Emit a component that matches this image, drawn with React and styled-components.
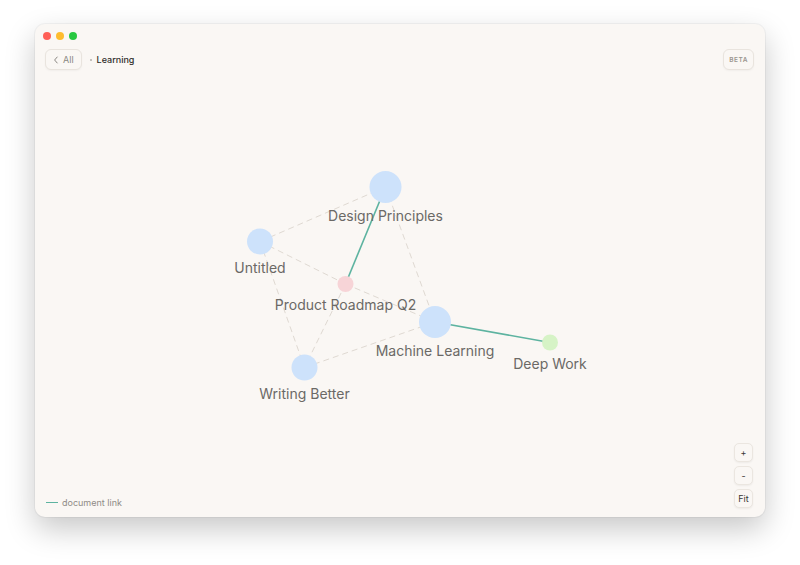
import React from "react";
import styled, { createGlobalStyle } from "styled-components";

const Global = createGlobalStyle`
  html, body { margin: 0; padding: 0; background: #ffffff; }
  body { font-family: Inter, "Noto Sans", "Liberation Sans", sans-serif; }
  #root { width: 800px; height: 565px; }
`;

const Page = styled.div`
  width: 800px;
  height: 565px;
  padding: 24px 35px 0 35px;
  box-sizing: border-box;
`;

const Window = styled.div`
  position: relative;
  width: 730px;
  height: 493px;
  background: #faf7f4;
  border-radius: 10px;
  box-shadow: 0 12px 30px rgba(0, 0, 0, 0.22), 0 0 0 1px rgba(0, 0, 0, 0.04);
  display: flex;
  flex-direction: column;
  overflow: hidden;
`;

const TitleBar = styled.div`
  display: flex;
  gap: 5px;
  padding: 8px 0 0 8px;
  height: 17px;
`;

const Light = styled.span`
  width: 8px;
  height: 8px;
  border-radius: 50%;
  background: ${(p) => p.$c};
`;

const Toolbar = styled.div`
  display: flex;
  align-items: center;
  padding: 0 11px 0 10px;
  height: 21px;
  position: relative;
  z-index: 2;
`;

const Pill = styled.button`
  display: flex;
  align-items: center;
  justify-content: center;
  gap: 4px;
  height: 21px;
  padding: 0 ${(p) => p.$px || 9}px;
  border: 1px solid #e9e4de;
  border-radius: 6px;
  background: #faf7f4;
  box-shadow: 0 1px 2px rgba(0, 0, 0, 0.04);
  font-family: Inter, "Liberation Sans", sans-serif;
  color: ${(p) => p.$color || "#8a8782"};
  font-size: ${(p) => p.$fs || 9}px;
  font-weight: ${(p) => p.$fw || 400};
  letter-spacing: ${(p) => p.$ls || 0}px;
  box-sizing: border-box;
  cursor: pointer;
`;

const Crumb = styled.div`
  display: flex;
  align-items: center;
  gap: 5px;
  margin-left: 8px;
  font-size: 9px;
  color: #2f2d2a;
  font-weight: 500;
`;

const Dot = styled.span`
  width: 2px;
  height: 2px;
  border-radius: 50%;
  background: #b5b1ab;
`;

const Spacer = styled.div`
  flex: 1;
`;

const Canvas = styled.div`
  flex: 1;
`;

const GraphSvg = styled.svg`
  position: absolute;
  inset: 0;
  width: 730px;
  height: 493px;
  z-index: 1;
`;

const Label = styled.text`
  font-family: Inter, "Liberation Sans", sans-serif;
  font-size: 14px;
  fill: #6b6966;
`;

const Legend = styled.div`
  position: absolute;
  left: 11px;
  bottom: 9px;
  display: flex;
  align-items: center;
  gap: 4px;
  font-size: 9px;
  color: #8f8b86;
  z-index: 2;
`;

const LegendLine = styled.span`
  width: 12px;
  height: 1.5px;
  background: #5db3a0;
`;

const ZoomStack = styled.div`
  position: absolute;
  right: 12px;
  bottom: 9px;
  display: flex;
  flex-direction: column;
  gap: 4px;
  z-index: 2;
`;

const ZoomBtn = styled.button`
  width: 19px;
  height: 19px;
  padding: 0;
  display: flex;
  align-items: center;
  justify-content: center;
  border: 1px solid #ebe6e0;
  border-radius: 5px;
  background: #faf7f4;
  box-shadow: 0 1px 2px rgba(0, 0, 0, 0.05);
  font-family: Inter, "Liberation Sans", sans-serif;
  font-size: 9px;
  color: #3a3835;
  box-sizing: border-box;
  cursor: pointer;
`;

const nodes = {
  dp: { x: 385.5, y: 187, r: 16, c: "#cde2fb", label: "Design Principles" },
  un: { x: 260, y: 241.5, r: 13, c: "#cde2fb", label: "Untitled" },
  pr: { x: 345.5, y: 284, r: 8, c: "#f7d4d7", label: "Product Roadmap Q2" },
  ml: { x: 435, y: 322, r: 16, c: "#cde2fb", label: "Machine Learning" },
  dw: { x: 550, y: 342.5, r: 8, c: "#d6f3c6", label: "Deep Work" },
  wb: { x: 304.5, y: 367.5, r: 13, c: "#cde2fb", label: "Writing Better" },
};

const dashed = [
  ["dp", "un"],
  ["dp", "ml"],
  ["un", "pr"],
  ["un", "wb"],
  ["pr", "ml"],
  ["pr", "wb"],
  ["wb", "ml"],
];
const solid = [
  ["dp", "pr"],
  ["ml", "dw"],
];

const Chevron = () => (
  <svg width="6" height="8" viewBox="0 0 6 8">
    <path d="M4.2 1 L1.6 4 L4.2 7" fill="none" stroke="#8a8782" strokeWidth="1" strokeLinecap="round" strokeLinejoin="round" />
  </svg>
);

export default function App() {
  return (
    <>
      <Global />
      <Page>
        <Window>
          <GraphSvg viewBox="35 24 730 493">
            {dashed.map(([a, b]) => (
              <line
                key={a + b}
                x1={nodes[a].x}
                y1={nodes[a].y}
                x2={nodes[b].x}
                y2={nodes[b].y}
                stroke="#dfd9d2"
                strokeWidth="1"
                strokeDasharray="6 4"
              />
            ))}
            {solid.map(([a, b]) => (
              <line
                key={a + b}
                x1={nodes[a].x}
                y1={nodes[a].y}
                x2={nodes[b].x}
                y2={nodes[b].y}
                stroke="#5db3a0"
                strokeWidth="1.6"
              />
            ))}
            {Object.entries(nodes).map(([k, n]) => (
              <circle key={k} cx={n.x} cy={n.y} r={n.r} fill={n.c} />
            ))}
            {Object.entries(nodes).map(([k, n]) => (
              <Label key={k + "l"} x={n.x} y={n.y + n.r + 18} textAnchor="middle">
                {n.label}
              </Label>
            ))}
          </GraphSvg>
          <TitleBar>
            <Light $c="#ff5f57" />
            <Light $c="#febc2e" />
            <Light $c="#28c840" />
          </TitleBar>
          <Toolbar>
            <Pill $px={7}>
              <Chevron />
              All
            </Pill>
            <Crumb>
              <Dot />
              Learning
            </Crumb>
            <Spacer />
            <Pill $px={5} $fs={6.5} $fw={600} $ls={0.5} $color="#9a968f">
              BETA
            </Pill>
          </Toolbar>
          <Canvas />
          <Legend>
            <LegendLine />
            document link
          </Legend>
          <ZoomStack>
            <ZoomBtn>+</ZoomBtn>
            <ZoomBtn>-</ZoomBtn>
            <ZoomBtn>Fit</ZoomBtn>
          </ZoomStack>
        </Window>
      </Page>
    </>
  );
}
